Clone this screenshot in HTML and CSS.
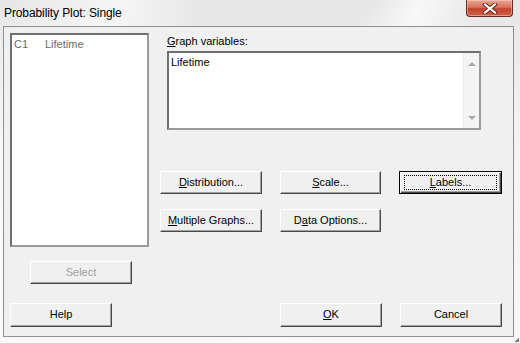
FILE: index.html
```html
<!DOCTYPE html>
<html>
<head>
<meta charset="utf-8">
<link rel="stylesheet" href="styles.css">
</head>
<body>
<div class="frame">
  <div class="titlebar">
    <span class="title">Probability Plot: Single</span>
    <div class="close">
      <svg width="18" height="11" viewBox="0 0 18 11">
        <path d="M4 1.5 L14 9.5 M14 1.5 L4 9.5" stroke="#5a2418" stroke-width="4" stroke-linecap="square" fill="none"/>
        <path d="M4 1.5 L14 9.5 M14 1.5 L4 9.5" stroke="#ffffff" stroke-width="2.2" stroke-linecap="square" fill="none"/>
      </svg>
    </div>
  </div>
  <div class="client">
    <div class="main">
      <div class="left">
        <div class="listbox">
          <div class="item"><span class="colname">C1</span><span>Lifetime</span></div>
        </div>
        <div class="btn select disabled">Select</div>
      </div>
      <div class="right">
        <div class="lbl"><u>G</u>raph variables:</div>
        <div class="textbox">
          <div class="text">Lifetime</div>
          <div class="vscroll">
            <span class="arrow up"></span>
            <span class="arrow down"></span>
          </div>
        </div>
        <div class="btnrow first">
          <div class="btn w102"><span><u>D</u>istribution...</span></div>
          <div class="btn w101 gap"><span><u>S</u>cale...</span></div>
          <div class="btn w103 gap default"><span class="focus"><u>L</u>abels...</span></div>
        </div>
        <div class="btnrow second">
          <div class="btn w102"><span><u>M</u>ultiple Graphs...</span></div>
          <div class="btn w101 gap"><span>D<u>a</u>ta Options...</span></div>
        </div>
      </div>
    </div>
    <div class="bottom">
      <div class="btn big">Help</div>
      <div class="btn big ok"><span><u>O</u>K</span></div>
      <div class="btn big cancel">Cancel</div>
    </div>
  </div>
  <div class="grip"></div>
</div>
</body>
</html>
```

FILE: styles.css
```css
html, body {
  margin: 0;
  padding: 0;
}
body {
  width: 520px;
  height: 343px;
  overflow: hidden;
  font-family: "Liberation Sans", Arial, sans-serif;
  font-size: 11px;
  color: #000;
}
.frame {
  width: 520px;
  height: 343px;
  background:
    linear-gradient(115deg, rgba(255,255,255,0) 0%, rgba(255,255,255,0.6) 18%, rgba(255,255,255,0) 30%, rgba(255,255,255,0) 55%, rgba(255,255,255,0.7) 62%, rgba(255,255,255,0) 72%),
    linear-gradient(180deg, #e6e6e6 0%, #f3f3f3 40%, #f7f7f7 100%);
  display: flex;
  flex-direction: column;
}
.titlebar {
  height: 26px;
  display: flex;
  align-items: flex-start;
}
.title {
  font-size: 12px;
  line-height: 14px;
  margin-top: 6px;
  margin-left: 4px;
  color: #000;
  letter-spacing: -0.1px;
}
.close {
  margin-left: auto;
  margin-right: 7px;
  width: 47px;
  height: 17px;
  box-sizing: border-box;
  border: 1px solid #6b2a20;
  border-top: none;
  border-radius: 0 0 4px 4px;
  background: linear-gradient(180deg, #e9a595 0%, #d7735e 45%, #c2442b 55%, #d0614a 100%);
  box-shadow: inset 0 0 0 1px rgba(255,220,210,0.45);
  display: flex;
  align-items: center;
  justify-content: center;
}
.close svg {
  display: block;
  margin-top: 1px;
}
.client {
  margin-left: 3px;
  width: 511px;
  height: 311px;
  box-sizing: border-box;
  border: 1px solid #8e8f8f;
  background: #f0f0f0;
  padding: 6px 0 0 6px;
}
.main {
  display: flex;
}
.left {
  width: 139px;
  display: flex;
  flex-direction: column;
}
.listbox {
  width: 139px;
  height: 214px;
  box-sizing: border-box;
  background: #fff;
  border: 2px solid;
  border-color: #6f6f6f #9a9a9a #9a9a9a #6f6f6f;
  box-shadow: 0 0 0 0 #fff;
  padding: 3px 0 0 2px;
}
.item {
  display: flex;
  line-height: 13px;
  color: #6a6a6a;
}
.colname {
  width: 31px;
}
.select {
  margin-top: 14px;
  margin-left: 20px;
  width: 102px;
  height: 23px;
}
.right {
  margin-left: 11px;
  display: flex;
  flex-direction: column;
}
.lbl {
  margin-left: 7px;
  margin-top: 2px;
  line-height: 13px;
}
.textbox {
  margin-left: 7px;
  margin-top: 3px;
  width: 314px;
  height: 79px;
  box-sizing: border-box;
  background: #fff;
  border: 2px solid;
  border-color: #6f6f6f #9a9a9a #9a9a9a #6f6f6f;
  display: flex;
}
.text {
  flex: 1;
  padding: 3px 0 0 2px;
  line-height: 13px;
}
.vscroll {
  width: 16px;
  background: #f4f4f4;
  border-left: 1px solid #ececec;
  display: flex;
  flex-direction: column;
  justify-content: space-between;
  align-items: center;
  padding: 9px 0 8px 0;
  box-sizing: border-box;
}
.arrow {
  width: 0;
  height: 0;
  border-left: 4px solid transparent;
  border-right: 4px solid transparent;
}
.arrow.up {
  border-bottom: 4px solid #a8a8a8;
}
.arrow.down {
  border-top: 4px solid #a8a8a8;
}
.btnrow {
  display: flex;
}
.btnrow.first {
  margin-top: 41px;
}
.btnrow.second {
  margin-top: 15px;
}
.btn {
  height: 23px;
  box-sizing: border-box;
  background: #f0f0f0;
  border: 1px solid;
  border-color: #ffffff #4a4a4a #4a4a4a #ffffff;
  box-shadow: inset -1px -1px 0 #a0a0a0;
  display: flex;
  align-items: center;
  justify-content: center;
  line-height: 13px;
  padding-bottom: 1px;
}
.btn.disabled {
  color: #a0a0a0;
}
.w102 { width: 102px; }
.w101 { width: 101px; }
.w103 { width: 103px; }
.gap { margin-left: 18px; }
.btn.default {
  border: 1px solid #000;
  box-shadow: inset 1px 1px 0 #fff, inset -1px -1px 0 #4a4a4a, inset -2px -2px 0 #a0a0a0;
  position: relative;
}
.focus {
  display: flex;
  align-items: center;
  justify-content: center;
  width: 93px;
  height: 15px;
  box-sizing: border-box;
  border: 1px dotted #000;
}
.bottom {
  display: flex;
  margin-top: 19px;
}
.btn.big {
  width: 102px;
  height: 24px;
}
.btn.ok {
  margin-left: 168px;
}
.btn.cancel {
  margin-left: 18px;
}
.grip {
  align-self: flex-end;
  width: 4px;
  height: 4px;
  margin-right: 1px;
  margin-top: 1px;
  background: linear-gradient(135deg, transparent 50%, #777 50%);
}
```
